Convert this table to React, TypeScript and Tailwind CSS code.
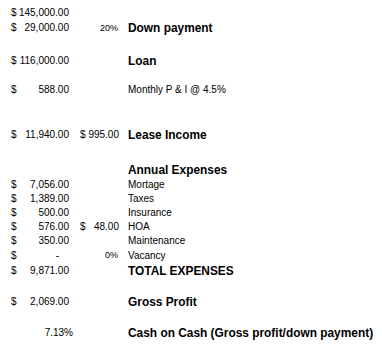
import React from 'react';

type Row = {
  h: number;
  a?: string; // amount, col A (with $)
  aRaw?: string; // right aligned, no $
  aDash?: boolean;
  b?: string; // amount, col B (with $)
  pct?: string; // small pct in col B
  label?: string;
  big?: boolean;
};

const rows: Row[] = [
  { h: 14, a: '145,000.00' },
  { h: 16, a: '29,000.00', pct: '20%', label: 'Down payment', big: true },
  { h: 17 },
  { h: 16, a: '116,000.00', label: 'Loan', big: true },
  { h: 14 },
  { h: 14, a: '588.00', label: 'Monthly P & I @ 4.5%' },
  { h: 30 },
  { h: 16, a: '11,940.00', b: '995.00', label: 'Lease Income', big: true },
  { h: 18 },
  { h: 17, label: 'Annual Expenses', big: true },
  { h: 14, a: '7,056.00', label: 'Mortage' },
  { h: 14, a: '1,389.00', label: 'Taxes' },
  { h: 14, a: '500.00', label: 'Insurance' },
  { h: 14, a: '576.00', b: '48.00', label: 'HOA' },
  { h: 14, a: '350.00', label: 'Maintenance' },
  { h: 15, aDash: true, pct: '0%', label: 'Vacancy' },
  { h: 16, a: '9,871.00', label: 'TOTAL EXPENSES', big: true },
  { h: 15 },
  { h: 16, a: '2,069.00', label: 'Gross Profit', big: true },
  { h: 15 },
  { h: 16, aRaw: '7.13%', label: 'Cash on Cash (Gross profit/down payment)', big: true },
];

export default function App() {
  return (
    <div
      className="w-[382px] h-[351px] bg-white text-black pt-[6px] overflow-hidden"
      style={{ fontFamily: '"Liberation Sans", Arial, sans-serif' }}
    >
      {rows.map((r, i) => (
        <div key={i} className="flex items-center" style={{ height: r.h }}>
          {/* column A */}
          <div className="w-[73px] flex items-center justify-between pl-[11px] text-[10px] leading-none">
            {r.a || r.aDash ? <span>$</span> : <span />}
            {r.a && <span className="pr-[4px]">{r.a}</span>}
            {r.aDash && <span className="pr-[14px]">-</span>}
            {r.aRaw && <span>{r.aRaw}</span>}
          </div>
          {/* column B */}
          <div className="w-[53px] flex items-center justify-between pl-[7px] text-[10px] leading-none">
            {r.b ? <span>$</span> : <span />}
            {r.b && <span className="pr-[7px]">{r.b}</span>}
            {r.pct && <span className="pr-[8px] text-[9px]">{r.pct}</span>}
          </div>
          {/* column C */}
          <div
            className={
              r.big
                ? 'pl-[2px] pt-[2px] text-[11.9px] font-bold leading-none whitespace-nowrap'
                : 'pl-[2px] text-[10px] leading-none whitespace-nowrap'
            }
          >
            {r.label}
          </div>
        </div>
      ))}
    </div>
  );
}
